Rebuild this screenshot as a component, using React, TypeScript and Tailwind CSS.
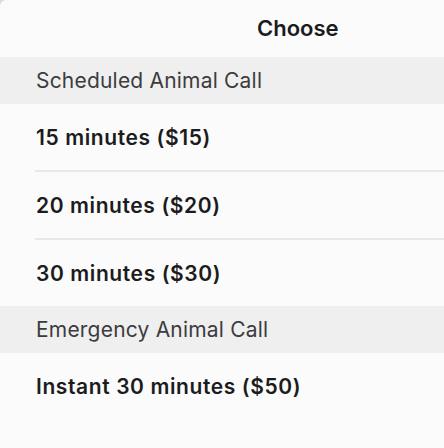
const groups = [
  {
    title: 'Scheduled Animal Call',
    options: ['15 minutes ($15)', '20 minutes ($20)', '30 minutes ($30)'],
  },
  {
    title: 'Emergency Animal Call',
    options: ['Instant 30 minutes ($50)'],
  },
];

export default function App() {
  return (
    <div className="h-[448px] w-[444px] overflow-hidden bg-[#d9d9d9]" style={{ fontFamily: 'Inter, "Noto Sans", sans-serif' }}>
      <div className="h-full rounded-tl-[6px] bg-[#fbfbfb]">
        <header className="flex h-[57px] items-center pl-[257px]">
          <h1 className="text-[22px] font-semibold text-[#1c1c1e]">Choose</h1>
        </header>
        {groups.map((group) => (
          <section key={group.title}>
            <div className="flex h-[47px] items-center bg-[#efefef] pl-9 text-[21px] tracking-[0.2px] text-[#3c3c3e]">
              {group.title}
            </div>
            <ul>
              {group.options.map((option, i) => (
                <li key={option}>
                  {i > 0 && <div className="ml-[35px] h-[2px] bg-[#e8e8ec]" />}
                  <button className="flex h-[66px] w-full items-center pl-9 pt-[2px] text-left text-[21px] font-semibold tracking-[0.6px] text-[#1c1c1e]">
                    {option}
                  </button>
                </li>
              ))}
            </ul>
          </section>
        ))}
      </div>
    </div>
  );
}
